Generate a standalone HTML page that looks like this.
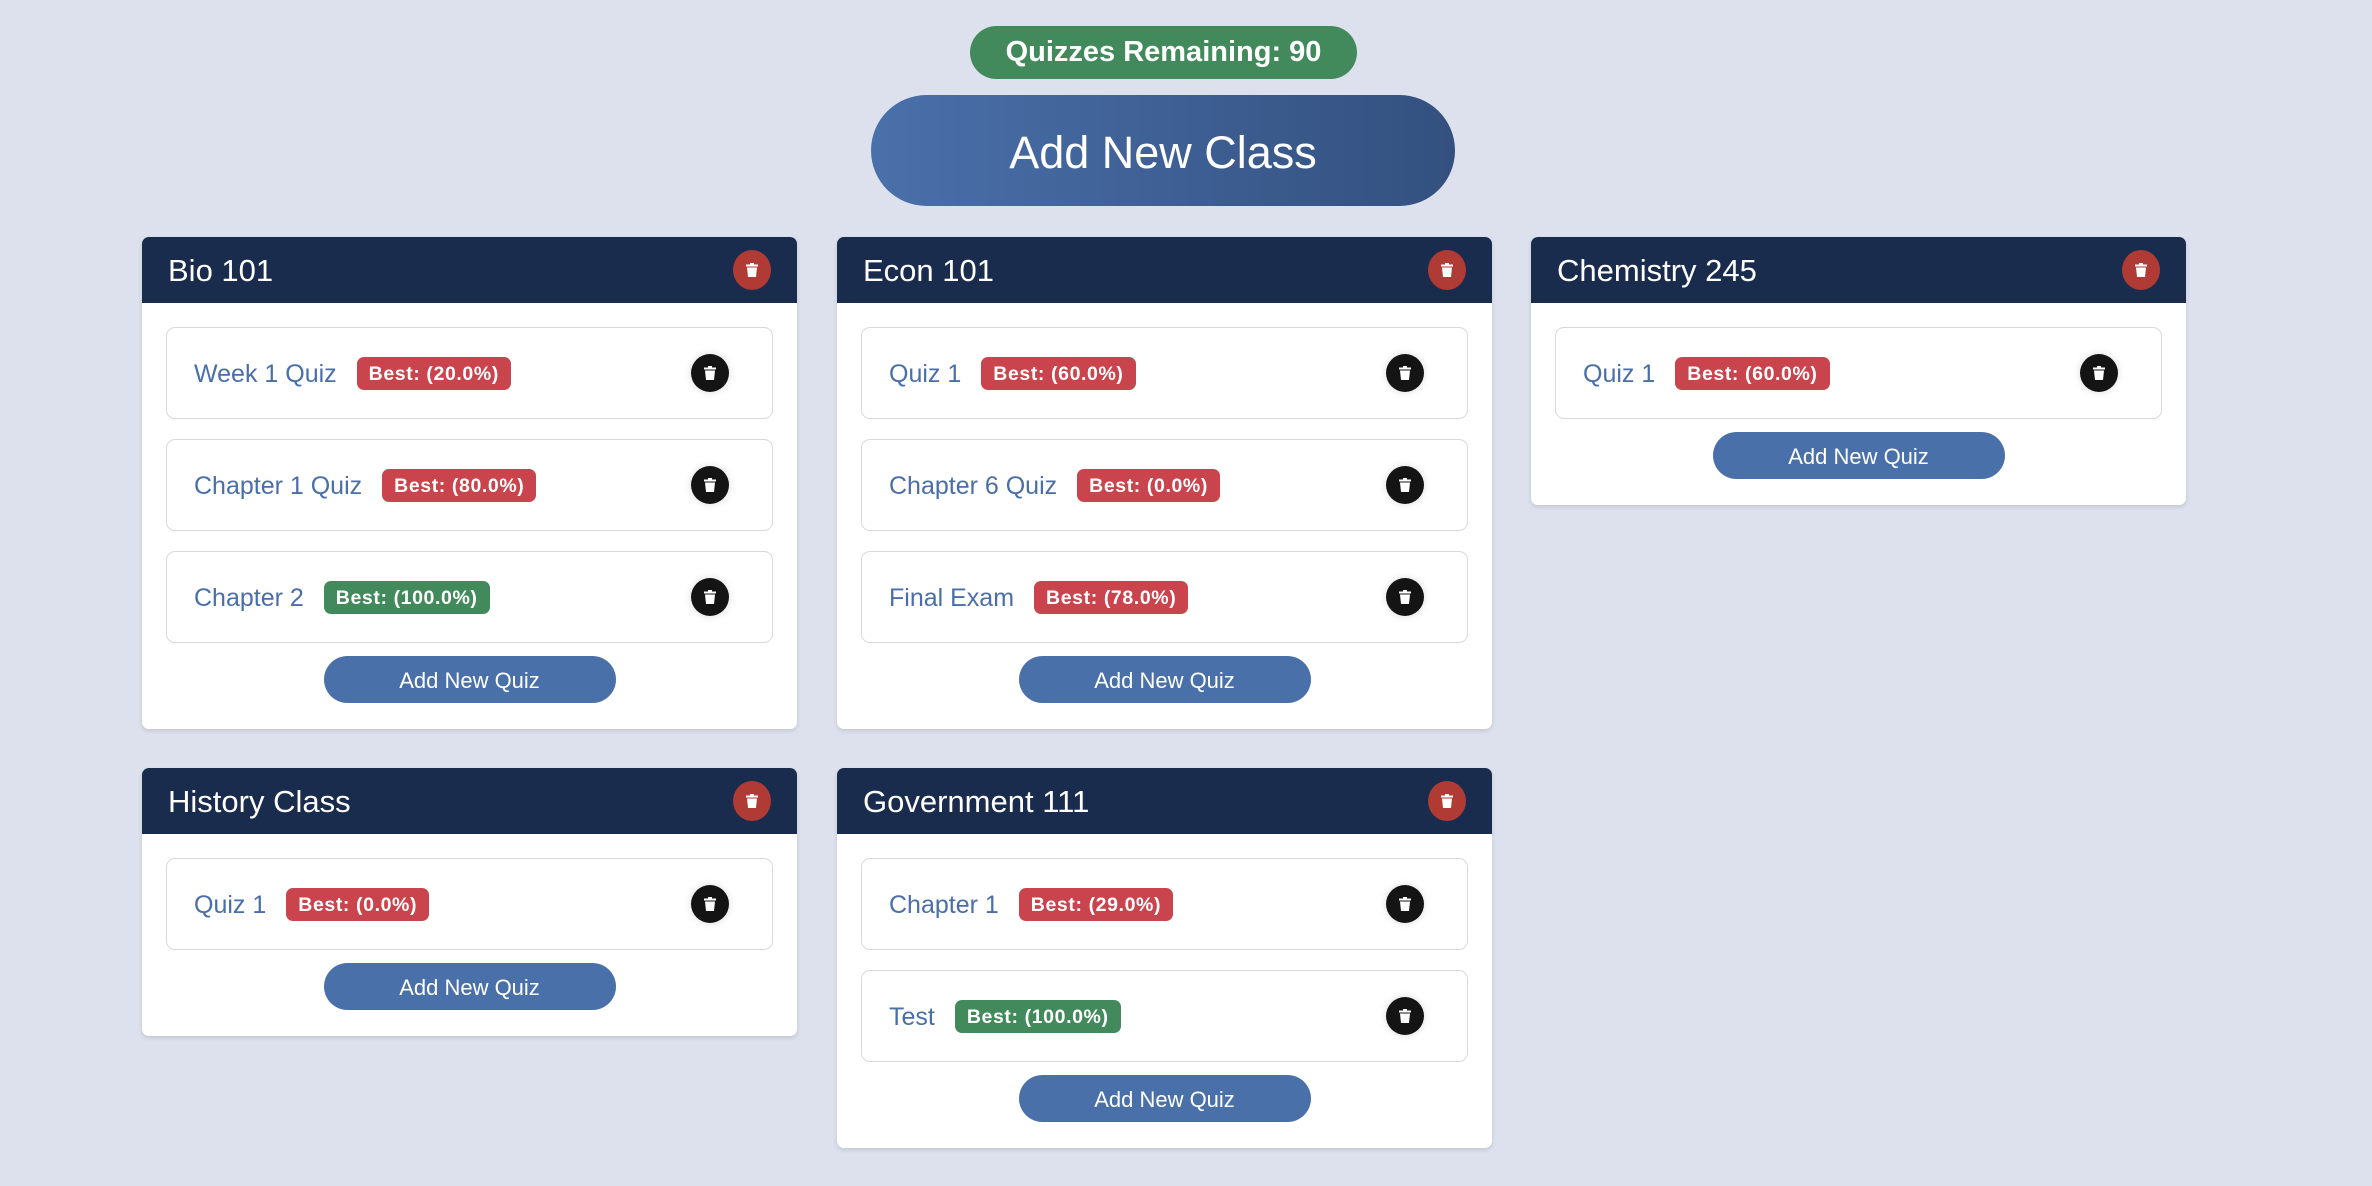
<!DOCTYPE html>
<html><head><meta charset="utf-8"><style>
*{box-sizing:border-box;margin:0;padding:0}
body{width:2372px;height:1186px;background:#dde1ed;font-family:"Liberation Sans",Arial,sans-serif;position:relative;overflow:hidden}
.pill{position:absolute;left:970px;top:26px;width:387px;height:53px;border-radius:27px;background:#428a5b;color:#fff;font-weight:bold;font-size:29px;display:flex;align-items:center;justify-content:center}
.addc{position:absolute;left:871px;top:95px;width:584px;height:111px;border-radius:56px;background:linear-gradient(90deg,#4a70aa,#33507f);color:#fff;font-size:45px;display:flex;align-items:center;justify-content:center;padding-top:4px}
.card{position:absolute;width:655px;background:#fff;border-radius:7px;box-shadow:0 2px 5px rgba(0,0,0,.12);overflow:hidden;padding-bottom:26px}
.hd{height:66px;background:#1a2c4d;color:#fff;font-size:31px;display:flex;align-items:center;padding-left:26px;position:relative;padding-top:2px}
.hdel{position:absolute;right:26px;top:13px;width:38px;height:40px;border-radius:50%;background:#b03a34;display:flex;align-items:center;justify-content:center}
.body{padding:24px 24px 0}
.q{height:92px;border:1.5px solid #d9d9dd;border-radius:9px;margin-bottom:20px;display:flex;align-items:center;padding-left:27px;position:relative}
.q .n{color:#4a6ea8;font-size:25px;padding-top:2px}
.b{margin-left:20px;height:33px;border-radius:7px;color:#fff;font-weight:bold;font-size:19.5px;letter-spacing:0.6px;padding:3px 12px 0;display:flex;align-items:center}
.r{background:#c9444c}.g{background:#428a5b}
.qd{position:absolute;left:524px;top:26px;width:38px;height:38px;border-radius:50%;background:#141414;box-shadow:0 0 8px rgba(0,0,0,.15);display:flex;align-items:center;justify-content:center}
.aq{display:block;margin:-7px auto 0;width:292px;height:47px;border-radius:24px;background:#4a70aa;color:#fff;font-size:22px;display:flex;align-items:center;justify-content:center;padding-top:2px}
</style></head><body>
<div class="pill">Quizzes Remaining: 90</div>
<div class="addc">Add New Class</div>

<svg width="0" height="0" style="position:absolute"><symbol id="t" viewBox="0 0 12 14"><rect x="0" y="1.5" width="12" height="2" fill="#fff"/><rect x="4" y="0" width="4" height="2" fill="#fff"/><path d="M1 4.5h10l-1 9.5H2z" fill="#fff"/></symbol></svg>

<div class="card" style="left:142px;top:237px">
<div class="hd">Bio 101<div class="hdel"><svg width="12" height="14"><use href="#t"/></svg></div></div>
<div class="body">
<div class="q"><span class="n">Week 1 Quiz</span><span class="b r">Best: (20.0%)</span><div class="qd"><svg width="12" height="14"><use href="#t"/></svg></div></div>
<div class="q"><span class="n">Chapter 1 Quiz</span><span class="b r">Best: (80.0%)</span><div class="qd"><svg width="12" height="14"><use href="#t"/></svg></div></div>
<div class="q"><span class="n">Chapter 2</span><span class="b g">Best: (100.0%)</span><div class="qd"><svg width="12" height="14"><use href="#t"/></svg></div></div>
<div class="aq">Add New Quiz</div></div></div>

<div class="card" style="left:837px;top:237px">
<div class="hd">Econ 101<div class="hdel"><svg width="12" height="14"><use href="#t"/></svg></div></div>
<div class="body">
<div class="q"><span class="n">Quiz 1</span><span class="b r">Best: (60.0%)</span><div class="qd"><svg width="12" height="14"><use href="#t"/></svg></div></div>
<div class="q"><span class="n">Chapter 6 Quiz</span><span class="b r">Best: (0.0%)</span><div class="qd"><svg width="12" height="14"><use href="#t"/></svg></div></div>
<div class="q"><span class="n">Final Exam</span><span class="b r">Best: (78.0%)</span><div class="qd"><svg width="12" height="14"><use href="#t"/></svg></div></div>
<div class="aq">Add New Quiz</div></div></div>

<div class="card" style="left:1531px;top:237px">
<div class="hd">Chemistry 245<div class="hdel"><svg width="12" height="14"><use href="#t"/></svg></div></div>
<div class="body">
<div class="q"><span class="n">Quiz 1</span><span class="b r">Best: (60.0%)</span><div class="qd"><svg width="12" height="14"><use href="#t"/></svg></div></div>
<div class="aq">Add New Quiz</div></div></div>

<div class="card" style="left:142px;top:768px">
<div class="hd">History Class<div class="hdel"><svg width="12" height="14"><use href="#t"/></svg></div></div>
<div class="body">
<div class="q"><span class="n">Quiz 1</span><span class="b r">Best: (0.0%)</span><div class="qd"><svg width="12" height="14"><use href="#t"/></svg></div></div>
<div class="aq">Add New Quiz</div></div></div>

<div class="card" style="left:837px;top:768px">
<div class="hd">Government 111<div class="hdel"><svg width="12" height="14"><use href="#t"/></svg></div></div>
<div class="body">
<div class="q"><span class="n">Chapter 1</span><span class="b r">Best: (29.0%)</span><div class="qd"><svg width="12" height="14"><use href="#t"/></svg></div></div>
<div class="q"><span class="n">Test</span><span class="b g">Best: (100.0%)</span><div class="qd"><svg width="12" height="14"><use href="#t"/></svg></div></div>
<div class="aq">Add New Quiz</div></div></div>
</body></html>
